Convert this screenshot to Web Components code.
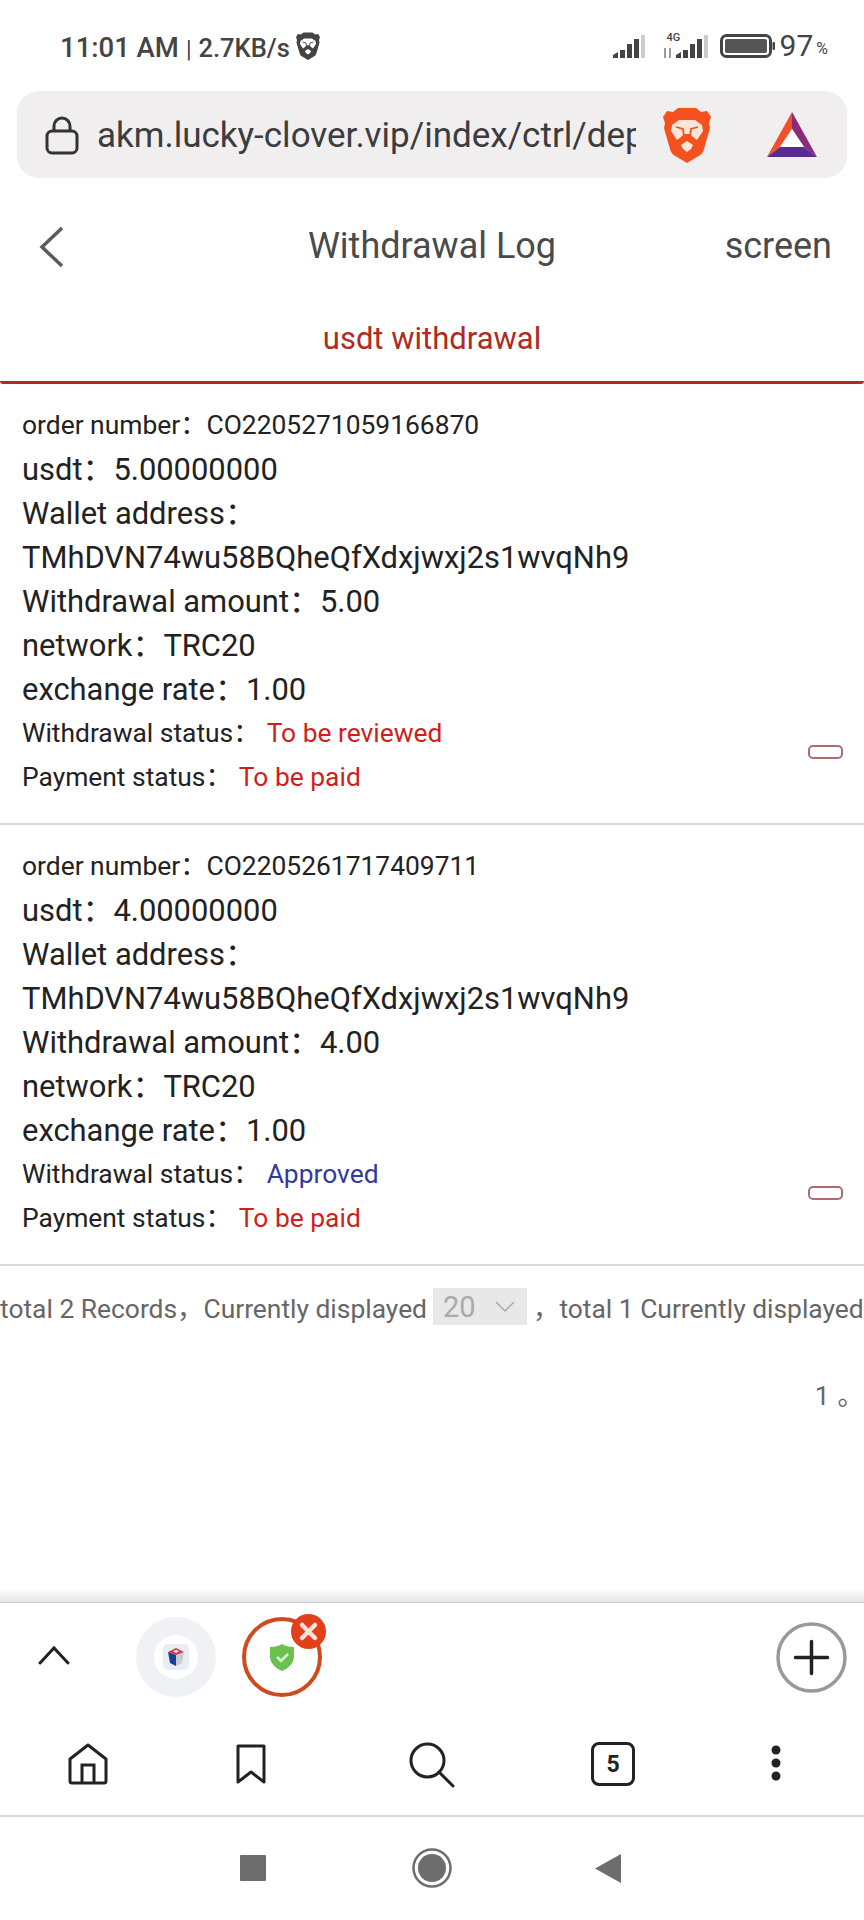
<!DOCTYPE html>
<html>
<head>
<meta charset="utf-8">
<title>Withdrawal Log</title>
<style>
  html, body { margin: 0; padding: 0; background: #fff; }
  body { width: 864px; height: 1920px; overflow: hidden; font-family: Roboto, "Noto Sans CJK SC", sans-serif; }
</style>
</head>
<body>
<phone-status></phone-status>
<url-bar>akm.lucky-clover.vip/index/ctrl/deposit</url-bar>
<page-header>Withdrawal Log</page-header>
<tab-strip>usdt withdrawal</tab-strip>

<order-record>
  <record-line small label="order number：">CO2205271059166870</record-line>
  <record-line label="usdt：">5.00000000</record-line>
  <record-line label="Wallet address："></record-line>
  <record-line>TMhDVN74wu58BQheQfXdxjwxj2s1wvqNh9</record-line>
  <record-line label="Withdrawal amount：">5.00</record-line>
  <record-line label="network：">TRC20</record-line>
  <record-line label="exchange rate：">1.00</record-line>
  <record-line small gap label="Withdrawal status：" tone="red">To be reviewed</record-line>
  <record-line small gap label="Payment status：" tone="red">To be paid</record-line>
</order-record>
<order-record>
  <record-line small label="order number：">CO2205261717409711</record-line>
  <record-line label="usdt：">4.00000000</record-line>
  <record-line label="Wallet address："></record-line>
  <record-line>TMhDVN74wu58BQheQfXdxjwxj2s1wvqNh9</record-line>
  <record-line label="Withdrawal amount：">4.00</record-line>
  <record-line label="network：">TRC20</record-line>
  <record-line label="exchange rate：">1.00</record-line>
  <record-line small gap label="Withdrawal status：" tone="blue">Approved</record-line>
  <record-line small gap label="Payment status：" tone="red">To be paid</record-line>
</order-record>

<pager-line></pager-line>
<browser-dock></browser-dock>
<browser-tools></browser-tools>
<android-nav></android-nav>

<script>
(function () {
  // shared lion head, colours come from custom properties
  const lion = `
    <svg viewBox="0 0 48 56" width="100%" height="100%" style="display:block">
      <path fill="var(--lion-shield)" d="M15 1h18l5 4 6-1 4 6-2 6 1 5-6 21c-1 4-3 6-7 8l-10 6-10-6c-4-2-6-4-7-8L1 21l1-5-2-6 4-6 6 1z"/>
      <path fill="var(--lion-face)" d="M9 18l7-5h16l7 5 1 6-6 9-4-3-3-3h-6l-3 3-4 3-6-9z"/>
      <path fill="var(--lion-face)" d="M18 38l6-4 6 4-2 4-4 3-4-3z"/>
      <path fill="none" stroke="var(--lion-shield)" stroke-width="1.8" d="M13 20l7 2 1 8M35 20l-7 2-1 8"/>
      <path fill="var(--lion-shield)" d="M21 27h6l-3 4z"/>
    </svg>`;

  function define(name, css, html) {
    customElements.define(name, class extends HTMLElement {
      constructor() {
        super();
        this.attachShadow({ mode: "open" });
        const template = document.createElement("template");
        template.innerHTML = `<style>${css}</style>${html}`;
        this.shadowRoot.appendChild(template.content.cloneNode(true));
      }
    });
  }

  define("phone-status", `
    :host { display: flex; align-items: center; height: 91px; padding: 3px 36px 0 60px; box-sizing: border-box; color: #444; }
    .clock { font-size: 27.5px; font-weight: 500; white-space: nowrap; }
    .clock i { font-style: normal; font-weight: 400; font-size: 23px; margin: 0 7px; }
    .clock b { font-weight: 500; font-size: 25.5px; }
    .lion { width: 24px; height: 28px; margin-left: 6px; margin-top: -2px; --lion-shield: #444; --lion-face: #fff; }
    .right { margin-left: auto; display: flex; align-items: center; margin-top: -3px; }
    .four { position: relative; width: 46px; height: 24px; margin-left: 17px; }
    .four span { position: absolute; left: 4px; top: -3px; font-size: 11px; font-weight: 500; }
    .batt { margin-left: 11px; }
    .pct { font-size: 30px; margin-left: 5px; }
    .sym { font-size: 16px; margin-left: 3px; margin-top: 6px; }
  `, `
    <span class="clock">11:01 AM<i>|</i><b>2.7KB/s</b></span>
    <span class="lion">${lion}</span>
    <span class="right">
      <svg width="33" height="24" viewBox="0 0 33 24"><path fill="#444" d="M0 24v-3l5-3v6zM7 24v-8h5v8zM14 24V10h5v14zM21 24V5h5v19z"/><path fill="#ccc" d="M28 24V1h4v23z"/></svg>
      <span class="four"><span>4G</span>
        <svg width="46" height="24" viewBox="0 0 46 24" style="display:block"><path fill="#999" d="M1 14h2v10H1zM6 14h2v10H6z"/><path fill="#444" d="M13 24v-3l5-3v6zM20 24v-8h5v8zM27 24V10h5v14zM34 24V5h5v19z"/><path fill="#ccc" d="M41 24V1h4v23z"/></svg>
      </span>
      <svg class="batt" width="55" height="24" viewBox="0 0 55 24"><rect x="1.5" y="1.5" width="49" height="21" rx="5" fill="none" stroke="#444" stroke-width="3"/><rect x="5" y="5" width="42" height="14" rx="2" fill="#555"/><rect x="52.5" y="8" width="2.5" height="8" rx="1" fill="#444"/></svg>
      <span class="pct">97</span><span class="sym">%</span>
    </span>
  `);

  define("url-bar", `
    :host { display: flex; align-items: center; height: 87px; margin: 0 17px; background: #f1eeef; border-radius: 22px; padding: 0 0 0 28px; box-sizing: border-box; color: #3c3c3e; }
    .lock { flex: none; width: 34px; height: 40px; margin-right: 18px; }
    .text { flex: none; width: 539px; padding-top: 2px; overflow: hidden; white-space: nowrap; font-size: 35px; }
    .lion { flex: none; width: 48px; height: 56px; margin-left: 27px; --lion-shield: #f4511e; --lion-face: #fde6d8; }
    .bat { flex: none; width: 50px; height: 45px; margin-left: 56px; }
  `, `
    <svg class="lock" viewBox="0 0 34 40"><rect x="2" y="16" width="30" height="22" rx="5" fill="none" stroke="#333" stroke-width="3"/><path d="M9 16v-5a8 8 0 0 1 16 0v5" fill="none" stroke="#333" stroke-width="3"/></svg>
    <span class="text"><slot></slot></span>
    <span class="lion">${lion}</span>
    <svg class="bat" viewBox="0 0 50 45">
      <path fill="#f0512d" d="M25 0v17L13 35 0 45z"/>
      <path fill="#8c2a7a" d="M25 0l25 45-13-10-12-18z"/>
      <path fill="#5a2a92" d="M0 45l13-10h24l13 10z"/>
      <path fill="#fff" d="M25 17l12 18H13z"/>
    </svg>
  `);

  define("page-header", `
    :host { display: flex; align-items: center; justify-content: center; position: relative; height: 118px; padding-top: 18px; box-sizing: border-box; color: #4a4a4a; font-size: 36px; }
    svg { position: absolute; left: 38px; top: 47px; }
    .screen { position: absolute; right: 32px; top: 0; line-height: 136px; }
  `, `
    <svg width="26" height="44" viewBox="0 0 26 44"><path d="M24 3L4 22l20 19" fill="none" stroke="#5c5c5c" stroke-width="3.5"/></svg>
    <slot></slot>
    <span class="screen">screen</span>
  `);

  define("tab-strip", `
    :host { display: flex; align-items: center; justify-content: center; height: 88px; box-sizing: border-box; border-bottom: 3px solid #a92b2b; border-radius: 0 0 3px 3px; color: #b02a20; font-size: 31px; }
  `, `<slot></slot>`);

  define("order-record", `
    :host { display: flex; justify-content: space-between; height: 441px; box-sizing: border-box; padding: 20px 21px 0 22px; border-bottom: 2px solid #d9d9d9; }
    .lines { display: flex; flex-direction: column; min-width: 0; }
    .pill { align-self: flex-end; width: 35px; height: 14px; margin-bottom: 64px; box-sizing: border-box; border: 2px solid #b06a70; border-radius: 5px; }
  `, `
    <div class="lines"><slot></slot></div>
    <span class="pill"></span>
  `);

  customElements.define("record-line", class extends HTMLElement {
    constructor() {
      super();
      this.attachShadow({ mode: "open" });
    }
    connectedCallback() {
      const small = this.hasAttribute("small");
      const tone = { red: "#cf1f1a", blue: "#2f3a9e" }[this.getAttribute("tone")] || "inherit";
      const gap = this.hasAttribute("gap") ? 7 : 0;
      const label = this.getAttribute("label") || "";
      // the small lines sit a pixel higher in their 44px row
      this.shadowRoot.innerHTML = `
        <style>
          :host { display: block; height: 44px; line-height: ${small ? 42 : 44}px; white-space: nowrap; color: #222; font-size: ${small ? 26.4 : 30.9}px; }
          .value { color: ${tone}; margin-left: ${gap}px; }
        </style>
        <span>${label}</span><span class="value"><slot></slot></span>`;
    }
  });

  define("pager-line", `
    :host { display: flex; flex-direction: column; height: 337px; box-sizing: border-box; color: #666; font-size: 26.4px; white-space: nowrap; overflow: hidden; }
    .row { display: flex; align-items: center; height: 37px; margin-top: 22px; }
    .num { flex: none; display: inline-flex; align-items: center; justify-content: space-between; width: 94px; height: 37px; box-sizing: border-box; padding: 0 12px 0 10px; margin: 0 6px 0 6px; background: #e8e8e8; color: #aaa; font-size: 29px; }
    .end { text-align: right; margin-top: 51px; line-height: 40px; }
    .end span { margin-left: 8px; }
    .fade { margin-top: auto; flex: none; height: 15px; background: linear-gradient(#fff, #e6e6e6); border-bottom: 1px solid #ccc; box-sizing: border-box; }
  `, `
    <div class="row"><span>total 2 Records，Currently displayed</span>
      <span class="num">20<svg width="20" height="11" viewBox="0 0 20 11"><path d="M1 1l9 9 9-9" fill="none" stroke="#aaa" stroke-width="1.5"/></svg></span>
      <span>，total 1 Currently displayed</span></div>
    <div class="end">1<span>。</span></div>
    <div class="fade"></div>
  `);

  define("browser-dock", `
    :host { display: block; position: relative; height: 108px; }
    .up { position: absolute; left: 38px; top: 42px; }
    .tile { position: absolute; left: 136px; top: 14px; width: 80px; height: 80px; border-radius: 50%; background: #f0f1f5; display: flex; align-items: center; justify-content: center; }
    .tile div { width: 44px; height: 44px; border-radius: 50%; background: #fff; display: flex; align-items: center; justify-content: center; }
    .ring { position: absolute; left: 242px; top: 14px; width: 80px; height: 80px; box-sizing: border-box; border: 4px solid #cf4a1f; border-radius: 50%; display: flex; align-items: center; justify-content: center; }
    .close { position: absolute; left: 291px; top: 11px; }
    .plus { position: absolute; left: 776px; top: 19px; }
  `, `
    <svg class="up" width="32" height="20" viewBox="0 0 32 20"><path d="M2 18L16 3l14 15" fill="none" stroke="#222" stroke-width="3" stroke-linecap="round"/></svg>
    <div class="tile"><div>
      <svg width="26" height="26" viewBox="0 0 26 26"><rect width="26" height="26" rx="5" fill="#e8edf4"/><path fill="#1c3f94" d="M5 8l8 3v11l-6-3z"/><path fill="#c9c9d6" d="M13 11l8-3-2 11-6 3z"/><path fill="#d13a4a" d="M5 8l8-4 8 4-8 3z"/><path fill="#fff" d="M10 7l3-1 3 1-3 2z"/></svg>
    </div></div>
    <div class="ring">
      <svg width="24" height="27" viewBox="0 0 24 27"><path fill="#6cc04f" d="M12 0c3 2 7 3 12 3v9c0 7-5 12-12 15C5 24 0 19 0 12V3c5 0 9-1 12-3z"/><path d="M7 13l4 4 7-7" fill="none" stroke="#d8f2cf" stroke-width="2.5"/></svg>
    </div>
    <svg class="close" width="35" height="35" viewBox="0 0 35 35"><circle cx="17.5" cy="17.5" r="17.5" fill="#e2401a"/><path d="M11 11l13 13M24 11L11 24" stroke="#fbe3da" stroke-width="4.5" stroke-linecap="round"/></svg>
    <svg class="plus" width="71" height="71" viewBox="0 0 71 71"><circle cx="35.5" cy="35.5" r="33.5" fill="none" stroke="#999" stroke-width="3.5"/><path d="M19.5 35.5h32M35.5 19.5v32" stroke="#222" stroke-width="3.5" stroke-linecap="round"/></svg>
  `);

  define("browser-tools", `
    :host { display: block; position: relative; height: 106px; box-sizing: border-box; border-bottom: 2px solid #d9d9d9; }
    svg { position: absolute; }
    .tabs { position: absolute; left: 591px; top: 31px; width: 44px; height: 44px; box-sizing: border-box; border: 3px solid #222; border-radius: 8px; display: flex; align-items: center; justify-content: center; font-size: 23px; font-weight: 700; color: #222; }
  `, `
    <svg style="left:67px;top:32px" width="42" height="42" viewBox="0 0 42 42"><path d="M3 16L21 2l18 14v22a2 2 0 0 1-2 2H5a2 2 0 0 1-2-2z" fill="none" stroke="#222" stroke-width="3" stroke-linejoin="round"/><path d="M15 40V22h12v18" fill="none" stroke="#222" stroke-width="3"/></svg>
    <svg style="left:236px;top:33px" width="30" height="40" viewBox="0 0 30 40"><path d="M2 2h26v36l-13-10L2 38z" fill="none" stroke="#222" stroke-width="3" stroke-linejoin="round"/></svg>
    <svg style="left:409px;top:31px" width="46" height="46" viewBox="0 0 46 46"><circle cx="18.5" cy="18.5" r="16.5" fill="none" stroke="#222" stroke-width="3"/><path d="M30 30l14 14" stroke="#222" stroke-width="3" stroke-linecap="round"/></svg>
    <div class="tabs">5</div>
    <svg style="left:771px;top:34px" width="10" height="38" viewBox="0 0 10 38"><circle cx="5" cy="5" r="4.5" fill="#222"/><circle cx="5" cy="18" r="4.5" fill="#222"/><circle cx="5" cy="31" r="4.5" fill="#222"/></svg>
  `);

  define("android-nav", `
    :host { display: flex; align-items: center; justify-content: center; height: 103px; position: relative; }
    svg { position: absolute; }
  `, `
    <svg style="left:240px;top:38px" width="26" height="26" viewBox="0 0 26 26"><rect width="26" height="26" rx="1" fill="#6d6d6d"/></svg>
    <svg style="left:412px;top:31px" width="40" height="40" viewBox="0 0 40 40"><circle cx="20" cy="20" r="18.5" fill="none" stroke="#6d6d6d" stroke-width="2.5"/><circle cx="20" cy="20" r="14" fill="#6d6d6d"/></svg>
    <svg style="left:595px;top:37px" width="26" height="29" viewBox="0 0 26 29"><path d="M26 0v29L0 14.5z" fill="#6d6d6d"/></svg>
  `);
})();
</script>
</body>
</html>
